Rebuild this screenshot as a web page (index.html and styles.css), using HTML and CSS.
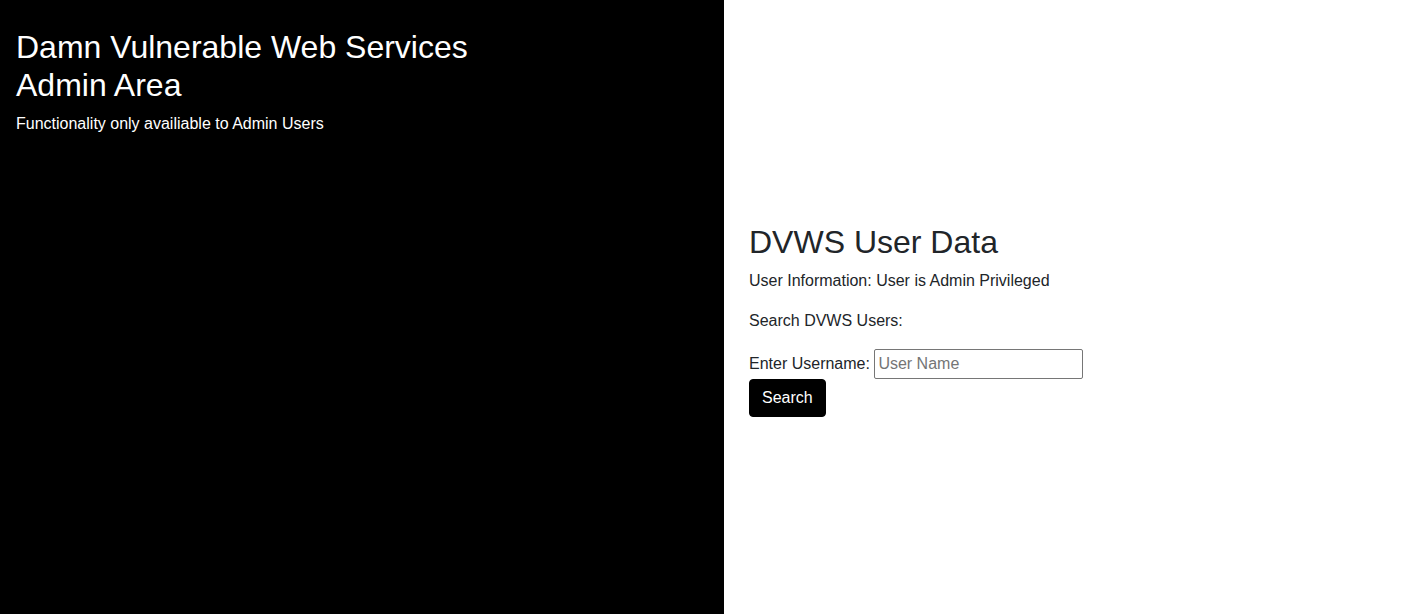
FILE: index.html
```html
<!DOCTYPE html>
<html lang="en">
<head>
<meta charset="utf-8">
<title>DVWS Admin Area</title>
<link rel="stylesheet" href="styles.css">
</head>
<body>
<div class="layout">
  <aside class="side">
    <h2 class="side-title">Damn Vulnerable Web Services<br>Admin Area</h2>
    <p class="side-sub">Functionality only availiable to Admin Users</p>
  </aside>
  <main class="main">
    <div class="content">
      <h2 class="main-title">DVWS User Data</h2>
      <p class="info">User Information: User is Admin Privileged</p>
      <p class="info">Search DVWS Users:</p>
      <form class="search-form" onsubmit="return false">
        <label class="label" for="username">Enter Username:</label>
        <input class="input" id="username" type="text" placeholder="User Name"><br>
        <button class="btn" type="submit">Search</button>
      </form>
    </div>
  </main>
</div>
</body>
</html>
```
FILE: styles.css
```css
* { box-sizing: border-box; }
html, body { margin: 0; padding: 0; height: 100%; }
body {
  font-family: "Liberation Sans", Arial, sans-serif;
  font-size: 16px;
  line-height: 1.5;
  color: #212529;
  background: #fff;
}
.layout {
  display: flex;
  height: 100%;
}
.side {
  width: 724px;
  flex: none;
  background: #000;
  color: #fff;
  padding: 28px 16px;
}
.side-title {
  margin: 0 0 7px;
  font-size: 32px;
  font-weight: 400;
  line-height: 1.2;
}
.side-sub {
  margin: 0;
}
.main {
  flex: 1;
  padding: 223px 25px 0;
}
.main-title {
  margin: 0 0 8px;
  font-size: 32px;
  font-weight: 400;
  line-height: 1.2;
}
.info {
  margin: 0 0 16px;
}
.search-form { margin: 0; }
.label { display: inline; }
.input {
  width: 209px;
  height: 30px;
  font-family: inherit;
  font-size: 16px;
  line-height: 1.5;
  padding: 1px 3px;
  border: 1px solid #767676;
  border-radius: 2px;
  color: #212529;
  vertical-align: baseline;
}
.input::placeholder { color: #757575; }
.btn {
  display: inline-block;
  margin: 0;
  padding: 6px 12px;
  font-family: inherit;
  font-size: 16px;
  line-height: 1.5;
  color: #fff;
  background: #000;
  border: 1px solid #000;
  border-radius: 4px;
}
```
